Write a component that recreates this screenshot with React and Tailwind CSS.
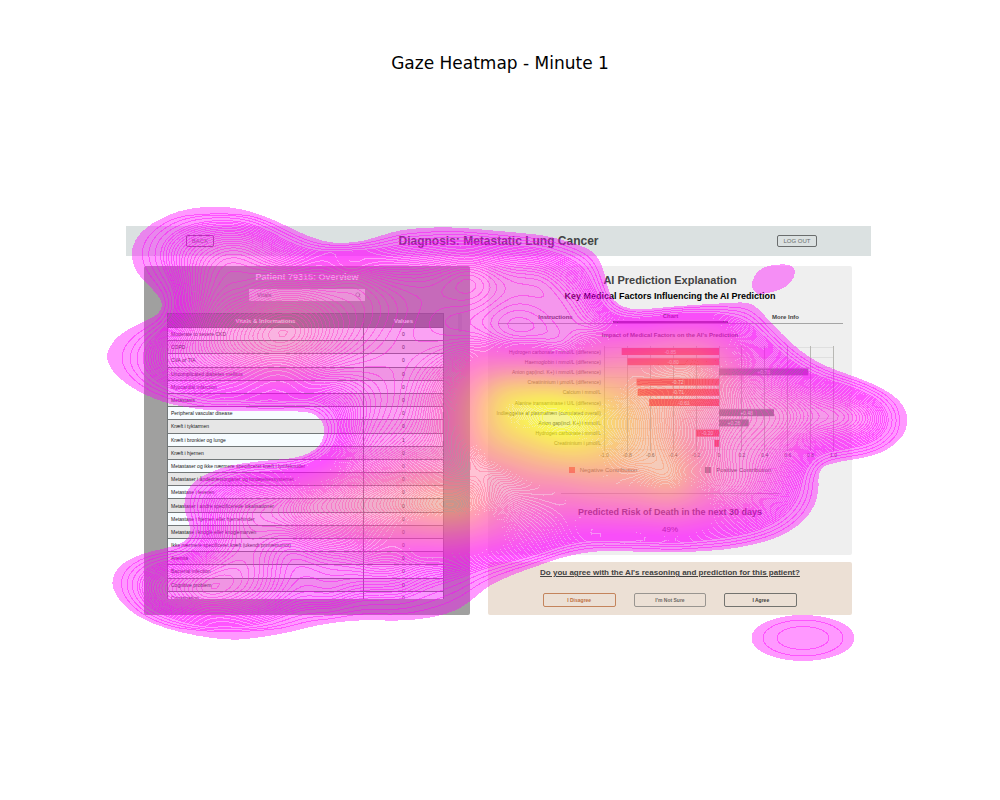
import React, { useMemo } from "react";
import { Search } from "lucide-react";

const ROWS = [
  ["Moderate to severe CKD", 0],
  ["COPD", 0],
  ["CVA or TIA", 0],
  ["Uncomplicated diabetes mellitus", 0],
  ["Myocardial infarction", 0],
  ["Metastasis", 0],
  ["Peripheral vascular disease", 0],
  ["Kræft i tyktarmen", 0],
  ["Kræft i bronkier og lunge", 1],
  ["Kræft i hjernen", 0],
  ["Metastaser og ikke nærmere specificeret kræft i lymfeknuder", 0],
  ["Metastaser i åndedrætsorganer og fordøjelsessystemet", 0],
  ["Metastase i leveren", 0],
  ["Metastaser i andre specificerede lokalisationer", 0],
  ["Metastase i hjernen eller hjernehinder", 0],
  ["Metastase i knogle eller knoglemarven", 0],
  ["Ikke nærmere specificeret kræft (ukendt primærtumor)", 0],
  ["Anemia", 0],
  ["Bacterial infection", 0],
  ["Cognitive problem", 0],
  ["Constipation", 0],
];

const FACTORS = [
  ["Hydrogen carbonate i mmol/L (difference)", -0.85, "-0.85"],
  ["Haemoglobin i mmol/L (difference)", -0.8, "-0.80"],
  ["Anion gap(incl. K+) i mmol/L (difference)", 0.78, "+0.78"],
  ["Creatininium i µmol/L (difference)", -0.72, "-0.72"],
  ["Calcium i mmol/L", -0.71, "-0.71"],
  ["Alanine transaminase i U/L (difference)", -0.61, "-0.61"],
  ["Indlæggelse af plasmafræn (cumulated overall)", 0.48, "+0.48"],
  ["Anion gap(incl. K+) i mmol/L", 0.26, "+0.26"],
  ["Hydrogen carbonate i mmol/L", -0.2, "-0.20"],
  ["Creatininium i µmol/L", -0.04, ""],
];

const TICKS = [-1, -0.8, -0.6, -0.4, -0.2, 0, 0.2, 0.4, 0.6, 0.8, 1];

// Boundary of the lowest density level.
const OUTLINE = [
  [131,256],[134,241],[146,227],[167,215],[190,208],[217,206],[243,209],[267,217],[287,226],[307,236],[327,242],[340,243],[357,242],[370,239],[383,235],[400,230],[420,228],[447,227],[477,229],[510,232],[543,235],[563,240],[580,245],[594,252],[602,265],[606,280],[609,292],[614,301],[623,307],[637,310],[667,307],[693,305],[727,303],[748,302],[758,308],[773,325],[790,342],[807,356],[827,367],[850,375],[874,384],[895,396],[905,408],[908,419],[905,434],[891,448],[873,456],[850,460],[833,463],[822,467],[818,476],[819,490],[814,508],[801,524],[780,537],[753,545],[723,550],[690,552],[650,552],[617,551],[600,551],[583,553],[563,557],[540,565],[517,573],[496,582],[483,590],[470,602],[453,612],[430,618],[400,621],[370,620],[347,621],[317,625],[287,633],[250,639],[227,640],[197,636],[167,629],[142,619],[125,607],[113,591],[112,577],[122,563],[143,553],[167,548],[183,543],[190,536],[190,525],[185,513],[184,500],[189,487],[200,477],[220,468],[243,463],[273,460],[297,458],[314,451],[323,441],[325,427],[319,417],[310,412],[287,411],[250,411],[217,411],[190,408],[170,404],[155,399],[137,391],[116,376],[106,360],[109,347],[120,334],[140,323],[158,315],[163,305],[158,295],[148,285],[136,272],
];

const ISLAND = [[752,280],[760,268],[777,264],[793,265],[796,275],[787,287],[773,292],[758,295],[752,289]];

// Density samples inside the plot: x, y, level fraction.
const SAMPLES = [
  [230,262,0.24],[180,250,0.14],[250,240,0.17],[245,290,0.26],[290,332,0.42],[265,345,0.4],[230,345,0.34],[170,352,0.18],[240,385,0.18],[190,300,0.17],[290,385,0.2],
  [340,300,0.3],[350,270,0.24],[410,270,0.2],[470,278,0.26],[540,275,0.2],[455,322,0.22],[375,370,0.24],[400,335,0.25],[360,430,0.2],[410,420,0.28],
  [460,380,0.42],[460,430,0.5],[480,410,0.68],[505,395,0.84],[515,420,0.93],[560,425,1.02],[530,408,0.97],[585,425,0.97],[530,440,0.86],[490,440,0.7],[570,445,0.9],[590,400,0.86],[550,395,0.9],[605,430,0.86],[645,430,0.7],
  [560,360,0.3],[510,355,0.3],[560,325,0.21],[620,340,0.28],[590,305,0.15],
  [693,372,0.6],[690,410,0.55],[660,365,0.55],[730,385,0.42],[640,390,0.66],[672,482,0.66],[640,470,0.66],[700,450,0.48],[500,475,0.5],[560,480,0.55],[600,505,0.4],[730,455,0.36],[745,490,0.32],[700,515,0.28],
  [590,532,0.14],[650,528,0.19],[540,530,0.24],[520,505,0.4],
  [750,385,0.32],[780,415,0.33],[840,418,0.24],[870,418,0.17],[740,340,0.19],[700,325,0.19],
  [455,508,0.66],[430,508,0.62],[475,508,0.58],[455,490,0.58],[455,525,0.5],[400,508,0.54],[360,506,0.46],[310,505,0.36],[250,505,0.24],[480,550,0.2],[420,550,0.24],[350,545,0.24],[290,545,0.18],
  [205,590,0.26],[160,590,0.17],[260,598,0.19],[310,570,0.15],[330,600,0.12],[400,590,0.11],[440,460,0.42],[380,465,0.32],
];

const OUTSIDE = [[90,200],[90,480],[90,660],[350,190],[700,240],[930,330],[930,520],[700,640],[230,436],[150,450],[500,660],[160,500],[850,310],[880,520],[620,620]];

function solveSurface(points) {
  const n = points.length;
  const size = n + 3;
  const kernel = (r2) => (r2 > 0 ? r2 * Math.log(r2) : 0);
  const m = [];
  for (let i = 0; i < size; i++) m.push(new Float64Array(size + 1));
  points.forEach(([x, y, v], i) => {
    points.forEach(([px, py], j) => {
      m[i][j] = kernel((x - px) ** 2 + (y - py) ** 2);
    });
    [1, x, y].forEach((t, k) => {
      m[i][n + k] = t;
      m[n + k][i] = t;
    });
    m[i][size] = v;
  });
  for (let c = 0; c < size; c++) {
    let p = c;
    for (let r = c + 1; r < size; r++) if (Math.abs(m[r][c]) > Math.abs(m[p][c])) p = r;
    [m[c], m[p]] = [m[p], m[c]];
    for (let r = c + 1; r < size; r++) {
      const f = m[r][c] / m[c][c];
      if (f) for (let k = c; k <= size; k++) m[r][k] -= f * m[c][k];
    }
  }
  const w = new Float64Array(size);
  for (let r = size - 1; r >= 0; r--) {
    let s = m[r][size];
    for (let k = r + 1; k < size; k++) s -= m[r][k] * w[k];
    w[r] = s / m[r][r];
  }
  return (x, y) => {
    let s = w[n] + w[n + 1] * x + w[n + 2] * y;
    for (let i = 0; i < n; i++) s += w[i] * kernel((x - points[i][0]) ** 2 + (y - points[i][1]) ** 2);
    return s;
  };
}

const STEP = 4;
const X0 = 92;
const Y0 = 196;
const COLS = 208;
const LINES = 114;

function soften(grid) {
  return grid.map((row, j) =>
    row.map((v, i) => {
      if (i === 0 || j === 0 || i === COLS - 1 || j === LINES - 1) return v;
      return (v * 4 + row[i - 1] * 2 + row[i + 1] * 2 + grid[j - 1][i] * 2 + grid[j + 1][i] * 2 +
        grid[j - 1][i - 1] + grid[j - 1][i + 1] + grid[j + 1][i - 1] + grid[j + 1][i + 1]) / 16;
    })
  );
}

function sampleGrid() {
  const f = solveSurface([
    ...OUTLINE.map(([x, y]) => [x, y, 0]),
    ...SAMPLES.map(([x, y, v]) => [x, y, v * v * 0.2 + v * 0.8]),
    ...OUTSIDE.map(([x, y]) => [x, y, -0.15]),
  ]);
  let grid = [];
  for (let j = 0; j < LINES; j++) {
    const row = new Float64Array(COLS);
    for (let i = 0; i < COLS; i++) {
      const edge = i === 0 || j === 0 || i === COLS - 1 || j === LINES - 1;
      row[i] = edge ? -1 : f(X0 + i * STEP, Y0 + j * STEP);
    }
    grid.push(row);
  }
  for (let pass = 0; pass < 6; pass++) grid = soften(grid);
  return grid;
}

// Closed iso-lines of the grid at one level, as SVG path data.
function contour(grid, level) {
  const at = new Map();
  const links = new Map();
  const cross = (i, j, horizontal) => {
    const key = (j * COLS + i) * 2 + (horizontal ? 1 : 0);
    if (!at.has(key)) {
      const a = grid[j][i];
      const b = horizontal ? grid[j][i + 1] : grid[j + 1][i];
      const t = ((level - a) / (b - a)) * STEP;
      at.set(key, [X0 + i * STEP + (horizontal ? t : 0), Y0 + j * STEP + (horizontal ? 0 : t)]);
      links.set(key, []);
    }
    return key;
  };
  for (let j = 0; j < LINES - 1; j++) {
    for (let i = 0; i < COLS - 1; i++) {
      const a = grid[j][i] >= level;
      const b = grid[j][i + 1] >= level;
      const c = grid[j + 1][i + 1] >= level;
      const d = grid[j + 1][i] >= level;
      const hits = [];
      if (a !== b) hits.push(cross(i, j, true));
      if (b !== c) hits.push(cross(i + 1, j, false));
      if (c !== d) hits.push(cross(i, j + 1, true));
      if (d !== a) hits.push(cross(i, j, false));
      for (let k = 0; k + 1 < hits.length; k += 2) {
        links.get(hits[k]).push(hits[k + 1]);
        links.get(hits[k + 1]).push(hits[k]);
      }
    }
  }
  const seen = new Set();
  let d = "";
  for (const start of at.keys()) {
    if (seen.has(start)) continue;
    const loop = [];
    let cur = start;
    while (cur !== undefined) {
      seen.add(cur);
      loop.push(at.get(cur).map((n) => n.toFixed(1)).join(" "));
      cur = links.get(cur).find((k) => !seen.has(k));
    }
    d += "M" + loop.join("L") + "Z";
  }
  return d;
}

function smooth(points) {
  const n = points.length;
  const mid = (a, b) => [(a[0] + b[0]) / 2, (a[1] + b[1]) / 2];
  let d = "M" + mid(points[n - 1], points[0]).join(" ");
  points.forEach((p, i) => {
    d += "Q" + p.join(" ") + " " + mid(p, points[(i + 1) % n]).join(" ");
  });
  return d + "Z";
}

const LEVELS = 140;
const SKIPPED = [1, 2, 4, 6, 8];

function Heatmap() {
  const bands = useMemo(() => {
    const grid = sampleGrid();
    const list = [];
    for (let k = 1; k < LEVELS; k++) {
      if (SKIPPED.includes(k)) continue;
      const t = k / LEVELS;
      const g = Math.round(255 * Math.max(0, (t - 0.1) / 0.9));
      list.push({ k, d: contour(grid, t), color: `rgb(255,${g},${255 - g})` });
    }
    return list;
  }, []);
  const outline = smooth(OUTLINE);
  return (
    <svg viewBox="0 0 1000 800" preserveAspectRatio="none" className="pointer-events-none absolute inset-0 h-full w-full" aria-hidden="true">
      <clipPath id="boundary">
        <path d={outline} />
      </clipPath>
      <g opacity="0.4" shapeRendering="crispEdges">
        <path d={outline} fill="#ff00ff" />
        <path d={smooth(ISLAND)} fill="#ff00ff" />
        <ellipse cx="803" cy="638" rx="51.5" ry="23" fill="#ff00ff" />
        <g clipPath="url(#boundary)" fillRule="evenodd">
          {bands.map((b) => (
            <path key={b.k} d={b.d} fill={b.color} />
          ))}
        </g>
      </g>
      <g opacity="0.45" fill="none" shapeRendering="crispEdges">
        <g clipPath="url(#boundary)">
          {bands.map((b) => (
            <path key={b.k} d={b.d} stroke={b.color} />
          ))}
        </g>
        <ellipse cx="803" cy="638" rx="40" ry="18" stroke="#ff00ff" />
        <ellipse cx="803" cy="638" rx="26" ry="11.5" stroke="#ff00ff" />
      </g>
    </svg>
  );
}

function FactorChart() {
  const zero = 231;
  const unit = 114.5;
  return (
    <svg viewBox="0 0 364 116" className="block w-full" role="img" aria-label="Impact of Medical Factors on the AI's Prediction">
      <g stroke="#dfdfdf" shapeRendering="crispEdges">
        {FACTORS.map(([name], i) => (
          <line key={name} x1={zero - unit} x2={zero + unit} y1={5 + i * 10.2} y2={5 + i * 10.2} />
        ))}
        <line x1={zero - unit} x2={zero + unit} y1="107" y2="107" />
      </g>
      <g stroke="#b8b8b4" strokeWidth="1" shapeRendering="crispEdges">
        {TICKS.map((t) => (
          <line key={t} x1={zero + t * unit} x2={zero + t * unit} y1="4" y2="109" />
        ))}
      </g>
      <g fontFamily="'Liberation Sans', Arial, sans-serif" fontSize="5">
        {FACTORS.map(([name, v, text], i) => {
          const y = 9.5 + i * 10.2;
          return (
            <g key={name}>
              <text x="113" y={y + 2} textAnchor="end" fill="#404040">{name}</text>
              <rect x={zero + Math.min(v, 0) * unit} y={y - 3.5} width={Math.abs(v) * unit} height="7" fill={v < 0 ? "#f04450" : "#7f8585"} />
              <text x={zero + (v * unit) / 2} y={y + 2} textAnchor="middle" fill="#eeeeee">{text}</text>
            </g>
          );
        })}
        {TICKS.map((t) => (
          <text key={t} x={zero + t * unit} y="115" textAnchor="middle" fill="#404040">
            {t === 0 ? "0" : t.toFixed(1)}
          </text>
        ))}
      </g>
    </svg>
  );
}

function PatientPanel() {
  return (
    <section className="flex h-[349px] min-w-0 flex-[326] flex-col items-center rounded-xs bg-[#a0a09f] pt-[5px]">
      <h2 className="text-[9px] leading-[12px] font-bold text-[#f4f4f4]">Patient 79315: Overview</h2>
      <div className="mt-[6px] flex h-[12px] w-[116px] items-center bg-[#dcdcdc] pr-1 pl-2">
        <input aria-label="Search" placeholder="Vitals" className="w-full min-w-0 bg-transparent text-[6px] leading-[8px] text-[#606060] outline-none placeholder:text-[#606060]" />
        <Search className="size-[6px] shrink-0 text-[#707070]" />
      </div>
      <div className="mt-[12px] flex w-full pr-[8px] pl-[23px]">
        <div className="h-[286px] flex-1 overflow-hidden">
          <table className="h-[292px] w-full table-fixed border-collapse text-[6px] leading-[8px] text-[#202020]">
            <thead>
              <tr className="h-[14px] bg-[#7b7f7f] text-[#f4f4f4]">
                <th className="w-[71%] border border-[#6a6f70] p-0">Vitals &amp; Informations</th>
                <th className="border border-[#6a6f70] p-0">Values</th>
              </tr>
            </thead>
            <tbody>
              {ROWS.map(([name, value]) => (
                <tr key={name} className="odd:bg-[#f7fcff] even:bg-[#e6e6e6]">
                  <td className="truncate border border-[#727778] p-0 pl-[3px] text-[5px]">{name}</td>
                  <td className="border border-[#727778] p-0 text-center text-[5px]">{value}</td>
                </tr>
              ))}
            </tbody>
          </table>
        </div>
        <div className="ml-[14px] h-[19px] w-[4px] rounded-xs bg-[#979797]" />
      </div>
    </section>
  );
}

function PredictionPanel() {
  return (
    <section className="h-[289px] rounded-xs bg-[#efefef] pt-[7px] text-center">
      <h2 className="text-[11px] leading-[14px] font-bold text-[#424242]">AI Prediction Explanation</h2>
      <h3 className="mt-[3px] text-[9px] leading-[12px] font-bold text-black">Key Medical Factors Influencing the AI Prediction</h3>
      <div role="tablist" className="mt-[8px] mr-[9px] ml-[10px] flex h-[14px] border-b border-[#a5a5a5] text-[6px] leading-[12px] font-bold text-[#424242]">
        <button role="tab" className="flex-1">Instructions</button>
        <button role="tab" aria-selected="true" className="flex-1 border-b-2 border-[#5a5a5a]">Chart</button>
        <button role="tab" className="flex-1">More Info</button>
      </div>
      <h4 className="mt-[7px] text-[6px] leading-[8px] font-bold text-[#424242]">Impact of Medical Factors on the AI&apos;s Prediction</h4>
      <div className="mt-[3px]">
        <FactorChart />
      </div>
      <div className="mt-[8px] flex justify-center gap-[68px] text-[6px] leading-[8px] text-[#404040]">
        <span className="flex items-center gap-[5px]"><i className="size-[6px] bg-[#f04450]" />Negative Contribution</span>
        <span className="flex items-center gap-[5px]"><i className="size-[6px] bg-[#7f8585]" />Positive Contribution</span>
      </div>
      <hr className="mx-auto mt-[19px] w-3/5 border-[#b4b4b4]" />
      <h3 className="mt-[12px] text-[9px] leading-[12px] font-bold text-[#363636]">Predicted Risk of Death in the next 30 days</h3>
      <p className="mt-[7px] text-[8px] leading-[10px] text-[#424242]">49%</p>
    </section>
  );
}

function AgreementPanel() {
  return (
    <section className="h-[53px] rounded-xs bg-[#ece0d5] pt-[5px] text-center">
      <p className="text-[8px] leading-[12px] font-bold text-[#424242] underline">Do you agree with the AI&apos;s reasoning and prediction for this patient?</p>
      <div className="mt-[14px] flex justify-center gap-[18px] text-[5px] leading-[8px] font-bold">
        <button className="h-[14px] w-1/5 rounded-xs border border-[#c4845c] text-[#c0703f]">I Disagree</button>
        <button className="h-[14px] w-1/5 rounded-xs border border-[#999590] text-[#6c6965]">I&apos;m Not Sure</button>
        <button className="h-[14px] w-1/5 rounded-xs border border-[#73736f] text-[#3e3d3a]">I Agree</button>
      </div>
    </section>
  );
}

export default function App() {
  return (
    <main className="relative min-h-screen bg-white pt-[52px] pr-[129px] pb-[185px] pl-[126px] font-['Liberation_Sans',Arial,sans-serif]">
      <h1 className="pl-[3px] text-center font-['DejaVu_Sans',sans-serif] text-[17px] leading-[22px] text-black">Gaze Heatmap - Minute 1</h1>
      <header className="mt-[152px] flex h-[30px] items-center justify-between bg-[#dbe1e1] pr-[54px] pl-[60px]">
        <button className="h-[12px] w-[28px] rounded-xs border border-[#6a6d6d] text-[6px] leading-[8px] text-[#6a6d6d]">BACK</button>
        <h2 className="pl-[6px] text-[12px] leading-[16px] font-bold text-[#424545]">Diagnosis: Metastatic Lung Cancer</h2>
        <button className="h-[12px] w-[40px] rounded-xs border border-[#6a6d6d] text-[6px] leading-[8px] text-[#6a6d6d]">LOG OUT</button>
      </header>
      <div className="mt-[10px] flex gap-[18px] pr-[19px] pl-[18px]">
        <PatientPanel />
        <div className="flex min-w-0 flex-[364] flex-col gap-[7px]">
          <PredictionPanel />
          <AgreementPanel />
        </div>
      </div>
      <Heatmap />
    </main>
  );
}
